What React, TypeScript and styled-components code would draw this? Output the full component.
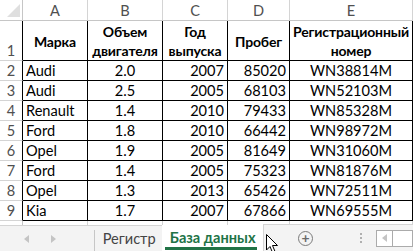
import React from 'react'
import styled, { createGlobalStyle, css } from 'styled-components'

const GlobalStyle = createGlobalStyle`
  html, body {
    margin: 0;
    padding: 0;
    background: #ffffff;
  }
  body {
    font-family: Lato, 'Liberation Sans', sans-serif;
  }
`

const GRID = '#d4d4d4'
const HEAD_LINE = '#c6c6c6'
const INK = '#000000'

type Align = 'left' | 'center' | 'right'
type Kind = 'corner' | 'colHead' | 'rowHead' | 'rowHeadLast' | 'title' | 'data' | 'blank'

const Screen = styled.div`
  position: relative;
  width: 413px;
  height: 251px;
  overflow: hidden;
  background: #ffffff;
`

const Sheet = styled.div`
  display: grid;
  grid-template-columns: 23px 65px 75px 65px 62px 123px;
  grid-template-rows: 21px 40px repeat(8, 20px) 4px;
  font-size: 14.6px;
  color: #000;
`

const Cell = styled.div<{ $kind: Kind; $align?: Align }>`
  box-sizing: border-box;
  display: flex;
  align-items: center;
  overflow: hidden;
  white-space: nowrap;
  padding: 0 3px;
  justify-content: ${({ $align }) =>
    $align === 'left' ? 'flex-start' : $align === 'right' ? 'flex-end' : 'center'};
  border-right: 1px solid ${INK};
  border-bottom: 1px solid ${INK};

  ${({ $kind }) =>
    $kind === 'corner' &&
    css`
      position: relative;
      border-right: 1px solid ${HEAD_LINE};
      border-bottom: 1px solid ${HEAD_LINE};
    `}

  ${({ $kind }) =>
    $kind === 'colHead' &&
    css`
      color: #505050;
      border-right: 1px solid ${GRID};
      border-bottom: 1px solid ${HEAD_LINE};
    `}

  ${({ $kind }) =>
    ($kind === 'rowHead' || $kind === 'rowHeadLast') &&
    css`
      padding: 0;
      color: #505050;
      border-bottom: 1px solid ${GRID};
    `}

  ${({ $kind }) =>
    $kind === 'rowHeadLast' &&
    css`
      border-right: 1px solid ${HEAD_LINE};
      border-bottom: none;
    `}

  ${({ $kind }) =>
    $kind === 'title' &&
    css`
      font-weight: 700;
      font-size: 14px;
      letter-spacing: -0.15px;
      text-align: center;
      white-space: normal;
      line-height: 19px;
      padding: 1px 1px 0;
    `}

  ${({ $kind }) =>
    $kind === 'blank' &&
    css`
      border-right: 1px solid ${GRID};
      border-bottom: none;
    `}
`

const RowNumber = styled.span<{ $bottom?: boolean }>`
  width: 100%;
  text-align: center;
  align-self: ${({ $bottom }) => ($bottom ? 'flex-end' : 'center')};
  padding-bottom: ${({ $bottom }) => ($bottom ? '1px' : '0')};
`

const CornerMark = styled.div`
  position: absolute;
  right: 2px;
  bottom: 3px;
  width: 0;
  height: 0;
  border-left: 13px solid transparent;
  border-bottom: 13px solid #dfdfdf;
`

const TabBar = styled.div`
  display: flex;
  height: 26px;
  box-sizing: border-box;
  background: #f3f3f3;
  border-top: 1px solid ${GRID};
  font-size: 14.6px;
`

const NavArea = styled.div`
  width: 97px;
  display: flex;
  align-items: center;
  gap: 22px;
  padding-left: 24px;
  box-sizing: border-box;
`

const NavArrow = styled.span<{ $dir: 'left' | 'right' }>`
  width: 0;
  height: 0;
  border-top: 4px solid transparent;
  border-bottom: 4px solid transparent;
  ${({ $dir }) =>
    $dir === 'left'
      ? css`border-right: 5px solid #c4c4c4;`
      : css`border-left: 5px solid #c4c4c4;`}
`

const SheetTab = styled.div<{ $active?: boolean }>`
  position: relative;
  display: flex;
  align-items: center;
  justify-content: center;
  box-sizing: border-box;
  height: 100%;
  ${({ $active }) =>
    $active
      ? css`
          width: 105px;
          margin-top: -1px;
          height: 26px;
          background: #ffffff;
          color: #217346;
          font-weight: 700;
          padding-bottom: 2px;
          &::after {
            content: '';
            position: absolute;
            left: 3px;
            right: 6px;
            bottom: 1px;
            height: 3px;
            background: #217346;
          }
        `
      : css`
          width: 71px;
          color: #444;
          padding-left: 2px;
          &::before {
            content: '';
            position: absolute;
            left: 0;
            top: 4px;
            bottom: 0;
            width: 1px;
            background: #c6c6c6;
          }
        `}
`

const ScrollArea = styled.div`
  flex: 1;
  display: flex;
  align-items: center;
  margin-top: -2px;
  height: 27px;
  box-sizing: border-box;
  border-top: 1px solid ${GRID};
  border-left: 1px solid ${GRID};
  background: #f3f3f3;
`

const AddSheet = styled.div`
  margin-left: 34px;
  width: 15px;
  height: 15px;
  border-radius: 50%;
  border: 1.5px solid #7a7a7a;
  box-sizing: border-box;
  display: flex;
  align-items: center;
  justify-content: center;
  color: #6a6a6a;
  font-size: 14px;
  font-weight: 700;
  line-height: 1;
`

const Dots = styled.div`
  margin-left: 47px;
  display: flex;
  flex-direction: column;
  gap: 2px;
  span {
    width: 2px;
    height: 2px;
    background: #b0b0b0;
  }
`

const ScrollButton = styled.div`
  margin-left: 14px;
  width: 17px;
  height: 17px;
  box-sizing: border-box;
  border: 1px solid #ababab;
  background: #ffffff;
  display: flex;
  align-items: center;
  justify-content: center;
`

const ScrollTrack = styled.div`
  width: 20px;
  height: 17px;
  box-sizing: border-box;
  border: 1px solid #ababab;
  border-left: none;
  background: #ffffff;
`

const Cursor = styled.svg`
  position: absolute;
  left: 266px;
  top: 234px;
`

const columns = ['A', 'B', 'C', 'D', 'E']
const titles = ['Марка', 'Объем двигателя', 'Год выпуска', 'Пробег', 'Регистрационный номер']
const aligns: Align[] = ['left', 'center', 'right', 'right', 'center']

const rows = [
  ['Audi', '2.0', '2007', '85020', 'WN38814M'],
  ['Audi', '2.5', '2005', '68103', 'WN52103M'],
  ['Renault', '1.4', '2010', '79433', 'WN85328M'],
  ['Ford', '1.8', '2010', '66442', 'WN98972M'],
  ['Opel', '1.9', '2005', '81649', 'WN31060M'],
  ['Ford', '1.4', '2005', '75323', 'WN81876M'],
  ['Opel', '1.3', '2013', '65426', 'WN72511M'],
  ['Kia', '1.7', '2007', '67866', 'WN69555M'],
]

const App: React.FC = () => {
  return (
    <>
      <GlobalStyle />
      <Screen>
        <Sheet>
          <Cell $kind="corner">
            <CornerMark />
          </Cell>
          {columns.map((c) => (
            <Cell key={c} $kind="colHead">{c}</Cell>
          ))}

          <Cell $kind="rowHead">
            <RowNumber $bottom>1</RowNumber>
          </Cell>
          {titles.map((t) => (
            <Cell key={t} $kind="title">{t}</Cell>
          ))}

          {rows.map((r, i) => (
            <React.Fragment key={i}>
              <Cell $kind="rowHead">
                <RowNumber>{i + 2}</RowNumber>
              </Cell>
              {r.map((v, j) => (
                <Cell key={j} $kind="data" $align={aligns[j]}>{v}</Cell>
              ))}
            </React.Fragment>
          ))}

          <Cell $kind="rowHeadLast" />
          {columns.map((c) => (
            <Cell key={c} $kind="blank" />
          ))}
        </Sheet>

        <TabBar>
          <NavArea>
            <NavArrow $dir="left" />
            <NavArrow $dir="right" />
          </NavArea>
          <SheetTab>Регистр</SheetTab>
          <SheetTab $active>База данных</SheetTab>
          <ScrollArea>
            <AddSheet>+</AddSheet>
            <Dots>
              <span />
              <span />
              <span />
            </Dots>
            <ScrollButton>
              <NavArrow $dir="left" />
            </ScrollButton>
            <ScrollTrack />
          </ScrollArea>
        </TabBar>

        <Cursor width="13" height="20" viewBox="0 0 13 20">
          <path d="M0.5 0.5 L0.5 16 L4 12.5 L6.5 18.5 L9 17.5 L6.5 11.5 L11.5 11.5 Z" fill="#fff" stroke="#000" strokeWidth="1" strokeLinejoin="round" />
        </Cursor>
      </Screen>
    </>
  )
}

export default App
